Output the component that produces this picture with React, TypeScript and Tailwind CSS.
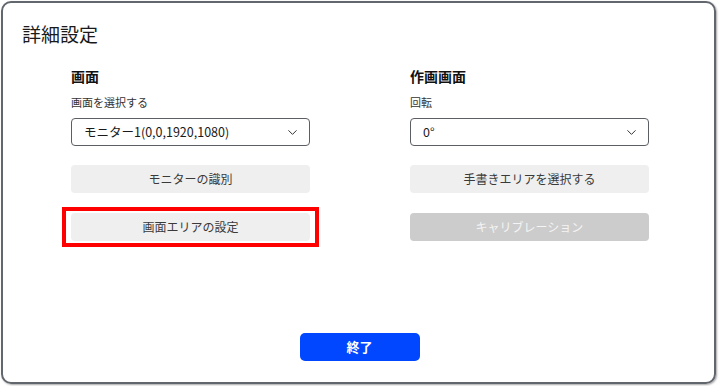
import { ChevronDown } from "lucide-react";

const font = { fontFamily: '"Noto Sans CJK JP", "Noto Sans", sans-serif' };

function Select({ value }: { value: string }) {
  return (
    <div className="flex h-[28px] w-full items-center justify-between rounded-[4px] border border-[#5b5e63] bg-white pl-[12px] pr-[9px] text-[12.5px] text-[#1a1a1a]">
      <span>{value}</span>
      <ChevronDown size={15} strokeWidth={1.6} className="text-[#333]" />
    </div>
  );
}

function Button({ label, disabled }: { label: string; disabled?: boolean }) {
  return (
    <button
      disabled={disabled}
      className={
        "flex h-[28px] w-full items-center justify-center rounded-[4px] text-[12px] " +
        (disabled ? "bg-[#cccccc] text-[#f4f4f4]" : "bg-[#efefef] text-[#3a3a3a]")
      }
    >
      {label}
    </button>
  );
}

function Column({
  title,
  label,
  value,
  children,
}: {
  title: string;
  label: string;
  value: string;
  children: React.ReactNode;
}) {
  return (
    <div className="flex w-[239px] flex-col">
      <h2 className="text-[14px] font-bold leading-[20px] text-[#111]">{title}</h2>
      <div className="mt-[7px] text-[11px] leading-[18px] text-[#333]">{label}</div>
      <div className="mt-[7px]">
        <Select value={value} />
      </div>
      <div className="mt-[19px] flex flex-col gap-[20px]">{children}</div>
    </div>
  );
}

export default function App() {
  return (
    <div className="h-[386px] w-[720px] bg-white" style={font}>
      <div className="ml-[1px] mt-[1px] flex h-[383px] w-[715px] flex-col rounded-[10px] border-2 border-[#62666d] shadow-[1px_1px_2px_rgba(0,0,0,0.35)]">
        <h1 className="ml-[19px] mt-[17px] text-[19px] leading-[28px] text-[#1a1a1a]">詳細設定</h1>

        <div className="ml-[68px] mt-[18px] flex gap-[100px]">
          <Column title="画面" label="画面を選択する" value="モニター1(0,0,1920,1080)">
            <Button label="モニターの識別" />
            <div className="relative">
              <Button label="画面エリアの設定" />
              <div className="pointer-events-none absolute -inset-x-[9px] -inset-y-[6px] border-4 border-[#ff0000]" />
            </div>
          </Column>
          <Column title="作画画面" label="回転" value="0°">
            <Button label="手書きエリアを選択する" />
            <Button label="キャリブレーション" disabled />
          </Column>
        </div>

        <div className="mt-auto mb-[21px] flex justify-center pl-[2px]">
          <button className="h-[28px] w-[120px] rounded-[5px] bg-[#0047ff] text-[13px] font-bold text-white">
            終了
          </button>
        </div>
      </div>
    </div>
  );
}
